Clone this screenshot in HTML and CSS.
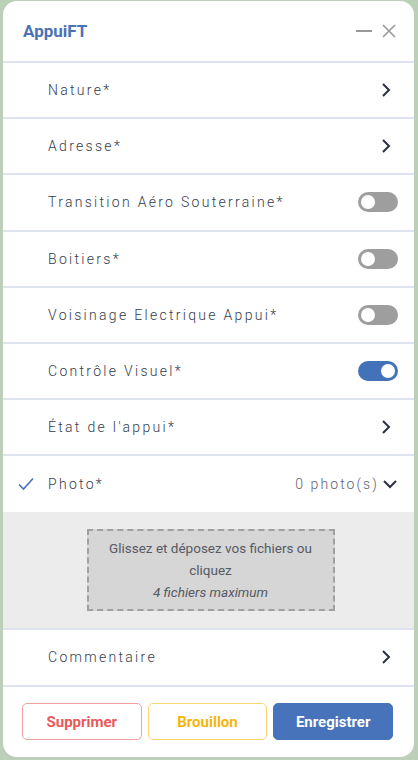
FILE: index.html
```html
<!DOCTYPE html>
<html lang="fr">
<head>
    <meta charset="UTF-8">
    <meta name="viewport" content="width=device-width, initial-scale=1.0">
    <title>AppuiFT</title>
    <link rel="stylesheet" href="styles.css">
</head>
<body>

    <div id="panel">
        <div class="panel-header">
            <h2>AppuiFT</h2>
            <div class="window-btns">
                <svg width="18" height="16" viewBox="0 0 18 16"><path d="M1 8 H17" stroke="#999" stroke-width="2"/></svg>
                <svg width="16" height="16" viewBox="0 0 16 16"><path d="M2 2 L14 14 M14 2 L2 14" stroke="#999" stroke-width="1.6"/></svg>
            </div>
        </div>

        <div class="row">
            <span class="label">Nature*</span>
            <svg class="chev" width="12" height="16" viewBox="0 0 12 16"><path d="M3 2 L9 8 L3 14" fill="none" stroke="#2b3140" stroke-width="2"/></svg>
        </div>
        <div class="row">
            <span class="label">Adresse*</span>
            <svg class="chev" width="12" height="16" viewBox="0 0 12 16"><path d="M3 2 L9 8 L3 14" fill="none" stroke="#2b3140" stroke-width="2"/></svg>
        </div>
        <div class="row">
            <span class="label">Transition Aéro Souterraine*</span>
            <span class="toggle"></span>
        </div>
        <div class="row">
            <span class="label">Boitiers*</span>
            <span class="toggle"></span>
        </div>
        <div class="row">
            <span class="label">Voisinage Electrique Appui*</span>
            <span class="toggle"></span>
        </div>
        <div class="row">
            <span class="label">Contrôle Visuel*</span>
            <span class="toggle on"></span>
        </div>
        <div class="row">
            <span class="label">État de l'appui*</span>
            <svg class="chev" width="12" height="16" viewBox="0 0 12 16"><path d="M3 2 L9 8 L3 14" fill="none" stroke="#2b3140" stroke-width="2"/></svg>
        </div>
        <div class="row photo-row">
            <svg class="check" width="16" height="14" viewBox="0 0 16 14"><path d="M1 7.5 L5.5 12 L15 1.5" fill="none" stroke="#4a72b5" stroke-width="1.6"/></svg>
            <span class="label">Photo*</span>
            <span class="count">0 photo(s)</span>
            <svg class="chev-down" width="16" height="12" viewBox="0 0 16 12"><path d="M2 3 L8 9 L14 3" fill="none" stroke="#2b3140" stroke-width="2"/></svg>
        </div>
        <div class="drop-area">
            <div class="dropzone">
                <p>Glissez et déposez vos fichiers ou cliquez</p>
                <p class="max">4 fichiers maximum</p>
            </div>
        </div>
        <div class="row">
            <span class="label">Commentaire</span>
            <svg class="chev" width="12" height="16" viewBox="0 0 12 16"><path d="M3 2 L9 8 L3 14" fill="none" stroke="#2b3140" stroke-width="2"/></svg>
        </div>

        <div class="footer">
            <button type="button" class="btn btn-delete">Supprimer</button>
            <button type="button" class="btn btn-draft">Brouillon</button>
            <button type="button" class="btn btn-save">Enregistrer</button>
        </div>
    </div>

</body>
</html>
```

FILE: styles.css
```css
body {
    margin: 0;
    padding: 1px 4px 3px 3px;
    background-color: #bccfb9;
    font-family: Roboto, "Liberation Sans", sans-serif;
}
#panel {
    background: white;
    border-radius: 14px;
    height: 756px;
    box-sizing: border-box;
    overflow: hidden;
    display: flex;
    flex-direction: column;
}
.panel-header {
    height: 60px;
    display: flex;
    align-items: center;
    justify-content: space-between;
    padding: 0 17px 0 20px;
    border-bottom: 2px solid #dde4ef;
}
.panel-header h2 {
    margin: 0;
    font-size: 17px;
    font-weight: bold;
    color: #4a72b5;
}
.window-btns {
    display: flex;
    gap: 8px;
    align-items: center;
}
.row {
    height: 54.2px;
    display: flex;
    align-items: center;
    padding: 0 16px 0 45px;
    border-bottom: 2px solid #dde4ef;
    flex-shrink: 0;
}
.label {
    flex: 1;
    font-size: 14px;
    font-weight: 300;
    letter-spacing: 2.3px;
    color: #353c4d;
}
.chev {
    margin-right: 6px;
}
.toggle {
    width: 40px;
    height: 20px;
    border-radius: 10px;
    background: #9e9e9e;
    position: relative;
}
.toggle::after {
    content: "";
    position: absolute;
    top: 3px;
    left: 3px;
    width: 14px;
    height: 14px;
    border-radius: 50%;
    background: white;
}
.toggle.on {
    background: #4472b8;
}
.toggle.on::after {
    left: 23px;
}
.photo-row {
    height: 56px;
    padding-left: 15px;
    border-bottom: none;
}
.check {
    margin-right: 14px;
}
.count {
    font-size: 14px;
    font-weight: 300;
    letter-spacing: 2.1px;
    color: #5d6373;
    margin-right: 3px;
}
.drop-area {
    background: #ececec;
    height: 116px;
    display: flex;
    justify-content: center;
    align-items: center;
    border-bottom: 2px solid #dde4ef;
    flex-shrink: 0;
}
.dropzone {
    width: 244px;
    height: 78px;
    margin-left: 4px;
    background: #d6d6d6;
    border: 2px dashed #a0a0a0;
    text-align: center;
    font-size: 13.5px;
    color: #555a64;
    display: flex;
    flex-direction: column;
    justify-content: center;
}
.dropzone p {
    margin: 0 16px;
    line-height: 22px;
}
.dropzone .max {
    font-style: italic;
}
.footer {
    flex: 1;
    display: flex;
    gap: 6px;
    align-items: center;
    padding: 0 21px 0 19px;
}
.btn {
    flex: 1;
    height: 37px;
    border-radius: 5px;
    font-family: Roboto, "Liberation Sans", sans-serif;
    font-size: 15px;
    font-weight: bold;
    background: white;
    cursor: pointer;
}
.btn-delete {
    border: 1px solid #f0a2a2;
    color: #e85a5a;
}
.btn-draft {
    border: 1px solid #f8d66e;
    color: #f4b60c;
}
.btn-save {
    border: 1px solid #4673b9;
    background: #4673b9;
    color: white;
}
```
